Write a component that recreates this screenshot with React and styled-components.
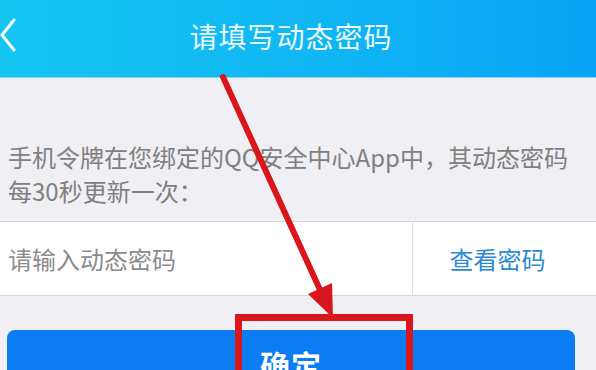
import styled, { createGlobalStyle } from "styled-components";

const GlobalStyle = createGlobalStyle`
  html, body {
    margin: 0;
    padding: 0;
    background: #efeff4;
    overflow: hidden;
  }
  * {
    box-sizing: border-box;
  }
`;

const Page = styled.div`
  position: relative;
  width: 596px;
  height: 370px;
  overflow: hidden;
  background: #efeff4;
  font-family: "Noto Sans CJK SC", "Noto Sans", sans-serif;
  display: flex;
  flex-direction: column;
`;

const Header = styled.header`
  height: 78px;
  flex-shrink: 0;
  display: flex;
  align-items: center;
  justify-content: center;
  position: relative;
  background: linear-gradient(90deg, #14c5f2 0%, #10b6f3 55%, #07a3f6 100%);
  border-bottom: 1px solid #7fd6f7;
`;

const BackButton = styled.button`
  position: absolute;
  left: 0;
  top: 18px;
  width: 20px;
  height: 34px;
  padding: 0;
  border: none;
  background: none;
  display: flex;
  align-items: center;
`;

const Title = styled.h1`
  margin: 0 14px 6px 0;
  font-size: 28px;
  font-weight: 400;
  color: #eafaff;
  letter-spacing: 1px;
`;

const Description = styled.p`
  margin: 0;
  padding: 62px 8px 13px;
  font-size: 24px;
  line-height: 34px;
  color: #808080;
`;

const InputRow = styled.div`
  height: 75px;
  flex-shrink: 0;
  display: flex;
  background: #fff;
  border-top: 1px solid #d6d6da;
  border-bottom: 1px solid #d6d6da;
`;

const Field = styled.div`
  flex: 1;
  display: flex;
  align-items: center;
  padding-left: 8px;
  font-size: 24px;
  color: #8c8c8c;
`;

const ViewButton = styled.div`
  width: 184px;
  display: flex;
  align-items: center;
  justify-content: center;
  padding-right: 14px;
  border-left: 1px solid #dcdcdc;
  font-size: 24px;
  color: #2b8ad3;
`;

const Confirm = styled.button`
  margin: 34px 21px 0 7px;
  height: 68px;
  flex-shrink: 0;
  border: none;
  border-radius: 8px;
  background: #0b7cf1;
  color: #fff;
  font-family: "Noto Sans CJK SC", sans-serif;
  font-size: 30px;
  font-weight: 700;
  letter-spacing: 1px;
`;

const Annotation = styled.svg`
  position: absolute;
  left: 0;
  top: 0;
  pointer-events: none;
`;

const Chevron = () => (
  <svg width="20" height="34" viewBox="0 0 20 34">
    <path
      d="M14 2 L2 17 L14 32"
      fill="none"
      stroke="#f2fcff"
      strokeWidth="3"
      strokeLinecap="round"
      strokeLinejoin="round"
    />
  </svg>
);

const App = () => {
  return (
    <Page>
      <GlobalStyle />
      <Header>
        <BackButton>
          <Chevron />
        </BackButton>
        <Title>请填写动态密码</Title>
      </Header>
      <Description>
        手机令牌在您绑定的QQ安全中心App中，其动态密码每30秒更新一次：
      </Description>
      <InputRow>
        <Field>请输入动态密码</Field>
        <ViewButton>查看密码</ViewButton>
      </InputRow>
      <Confirm>确定</Confirm>
      <Annotation width="596" height="370" viewBox="0 0 596 370">
        <line
          x1="223"
          y1="77"
          x2="321"
          y2="292"
          stroke="#d8161b"
          strokeWidth="6"
          strokeLinecap="round"
        />
        <polygon points="333,318 332,283 308,294" fill="#d8161b" />
        <rect
          x="238.5"
          y="317.5"
          width="171"
          height="80"
          fill="none"
          stroke="#d8161b"
          strokeWidth="7"
        />
      </Annotation>
    </Page>
  );
};

export default App;
